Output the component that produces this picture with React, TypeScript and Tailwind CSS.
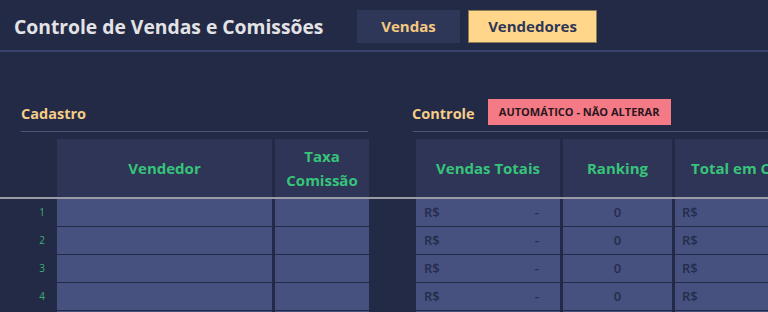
import React from 'react';

const rows = [1, 2, 3, 4, 5];

export default function App() {
  return (
    <div
      className="w-[768px] h-[312px] overflow-hidden bg-[#232a45]"
      style={{ fontFamily: '"Open Sans", "Liberation Sans", sans-serif' }}
    >
      {/* Top bar */}
      <div className="h-[52px] flex items-start border-b-2 border-[#3a4370]">
        <h1 className="ml-[14px] mt-[13px] text-[19.3px] font-bold text-[#e3e3e6] leading-[28px] w-[343px] whitespace-nowrap">
          Controle de Vendas e Comissões
        </h1>
        <button className="mt-[10px] w-[103px] h-[33px] bg-[#2f3759] text-[#f3c97f] text-[15px] font-bold">
          Vendas
        </button>
        <button className="mt-[10px] ml-[8px] w-[129px] h-[33px] bg-[#ffd68a] border border-[#8c7b56] text-[#2e3656] text-[15px] font-bold">
          Vendedores
        </button>
      </div>

      {/* Section labels */}
      <div className="mt-[47px] h-[26px] flex items-center">
        <span className="ml-[21px] w-[348px] text-[14.5px] font-bold text-[#f5cd88] pt-[3px]">Cadastro</span>
        <span className="ml-[43px] text-[14.5px] font-bold text-[#f5cd88] pt-[3px]">Controle</span>
        <span className="ml-[13px] h-[26px] w-[183px] flex items-center justify-center bg-[#f47b85] text-[11px] font-bold text-[#2a1620]">
          AUTOMÁTICO - NÃO ALTERAR
        </span>
      </div>

      {/* Section lines */}
      <div className="mt-[6px] flex">
        <div className="ml-[21px] w-[347px] h-px bg-[#4a5275]" />
        <div className="ml-[45px] flex-1 h-px bg-[#4a5275]" />
      </div>

      {/* Header row */}
      <div className="mt-[7px] flex border-b-2 border-[#9a9ba6] text-[#37c47a] text-[15px] font-bold leading-[24px] whitespace-nowrap">
        <div className="w-[57px] shrink-0" />
        <div className="w-[215px] shrink-0 h-[58px] bg-[#2e3556] flex items-center justify-center">Vendedor</div>
        <div className="ml-[3px] w-[94px] shrink-0 h-[58px] bg-[#2e3556] flex items-center justify-center text-center">
          Taxa<br />Comissão
        </div>
        <div className="ml-[47px] w-[144px] shrink-0 h-[58px] bg-[#2e3556] flex items-center justify-center">Vendas Totais</div>
        <div className="ml-[3px] w-[109px] shrink-0 h-[58px] bg-[#2e3556] flex items-center justify-center">Ranking</div>
        <div className="ml-[3px] w-[140px] shrink-0 h-[58px] bg-[#2e3556] flex items-center pl-[16px]">Total em Comissão</div>
      </div>

      {/* Data rows */}
      <div className="flex flex-col gap-px">
        {rows.map(n => (
          <div key={n} className="flex h-[27px] text-[13px] font-semibold">
            <div className="w-[57px] shrink-0 flex items-center justify-end pr-[12px] text-[10px] font-normal text-[#3bb07a]">{n}</div>
            <div className="w-[215px] shrink-0 bg-[#465180]" />
            <div className="ml-[3px] w-[94px] shrink-0 bg-[#465180]" />
            <div className="ml-[47px] w-[144px] shrink-0 bg-[#465180] flex items-center justify-between pl-[8px] pr-[21px] text-[#252c4c]">
              <span>R$</span>
              <span>-</span>
            </div>
            <div className="ml-[3px] w-[109px] shrink-0 bg-[#465180] flex items-center justify-center text-[#252c4c]">0</div>
            <div className="ml-[3px] w-[140px] shrink-0 bg-[#465180] flex items-center pl-[7px] text-[#252c4c]">R$</div>
          </div>
        ))}
      </div>
    </div>
  );
}
